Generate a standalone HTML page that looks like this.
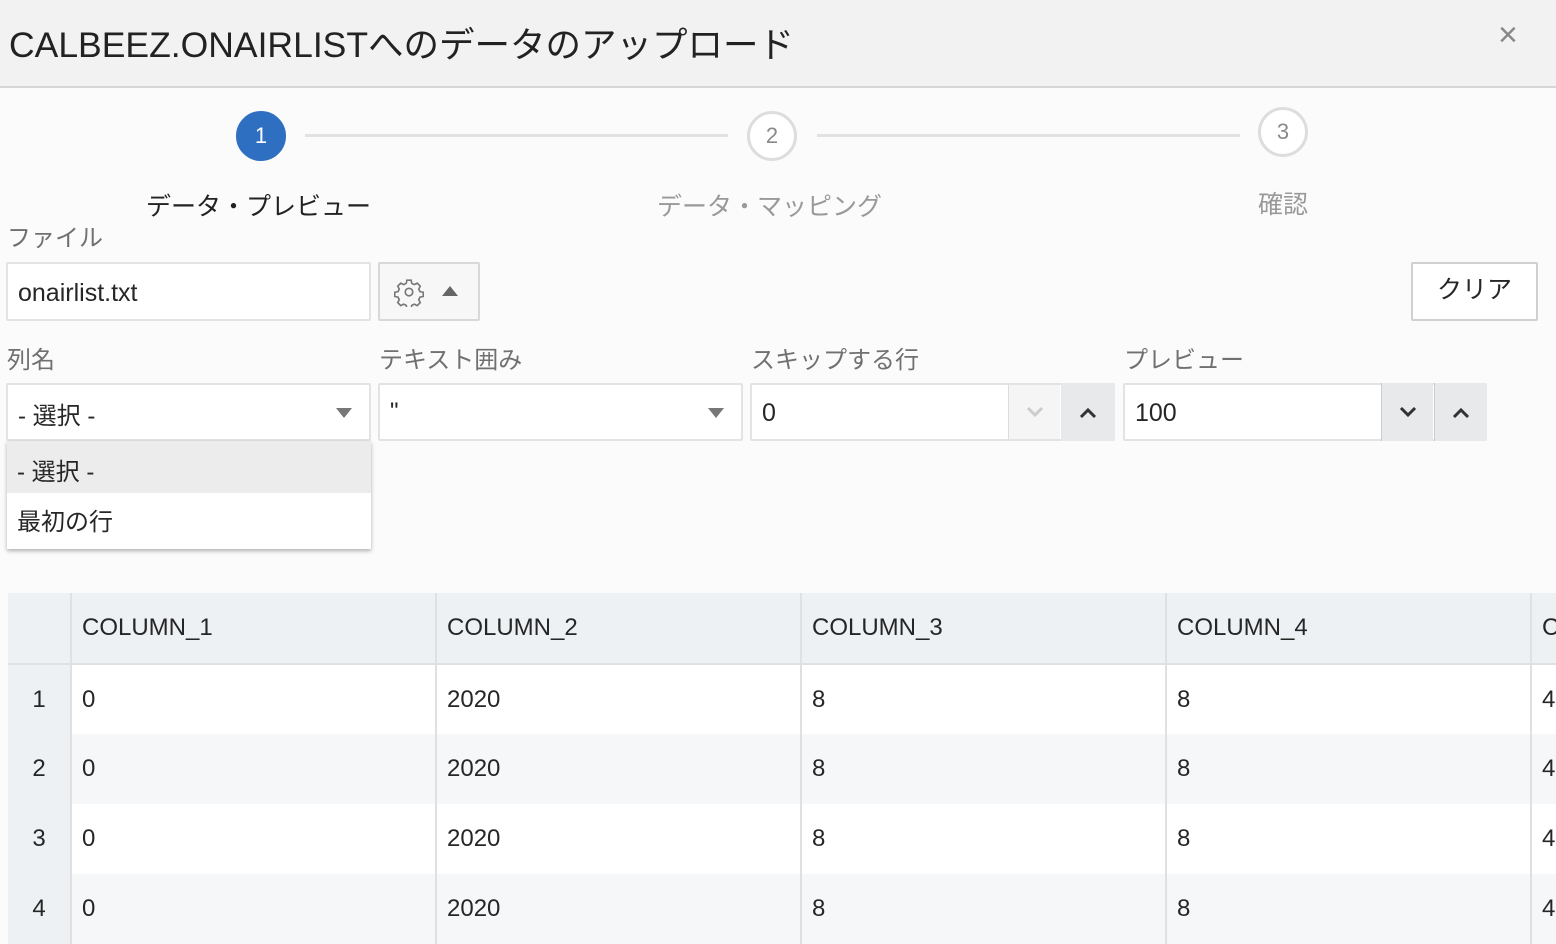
<!DOCTYPE html>
<html><head><meta charset="utf-8"><style>
*{box-sizing:border-box;margin:0;padding:0}
body{width:1556px;height:934px;overflow:hidden;background:#fbfbfb;font-family:"Liberation Sans","Noto Sans CJK JP",sans-serif;color:#262626;position:relative}
.a{position:absolute}
.hdr{left:0;top:0;width:1556px;height:88px;background:#f2f2f2;border-bottom:2px solid #d6d6d6}
.box{background:#fff;border:2px solid #e3e3e3;border-radius:2px}
.lbl{font-size:24px;color:#707070}
.line{height:3px;background:#e2e2e2}
.circ{width:50px;height:50px;border-radius:50%;border:3px solid #ddd;color:#8a8a8a;font-size:22px;text-align:center;line-height:44px;background:#fff}
table{border-collapse:collapse;position:absolute;left:8px;top:593px;font-size:24px;table-layout:fixed;width:1600px}
td{height:70px;border-right:2px solid #e0e0e0;padding-left:10px;background:#fff;overflow:hidden;white-space:nowrap}
tr.h td{background:#eef1f4;height:71px;border-bottom:2px solid #e0e0e0}
tr.g td{background:#f6f7f8}
td.n{background:#eef1f4 !important;text-align:center;padding:0}
</style></head><body>
<div class="a hdr"></div>
<div class="a" style="left:9px;top:17px;font-size:35.5px;color:#222">CALBEEZ.ONAIRLISTへのデータのアップロード</div>
<div class="a" style="left:1498px;top:16px;font-size:34px;color:#888">×</div>

<div class="a line" style="left:305px;top:134px;width:423px"></div>
<div class="a line" style="left:817px;top:134px;width:423px"></div>
<div class="a circ" style="left:236px;top:111px;background:#2f6fc2;border-color:#2f6fc2;color:#fff">1</div>
<div class="a circ" style="left:747px;top:111px">2</div>
<div class="a circ" style="left:1258px;top:107px">3</div>
<div class="a" style="left:146px;top:187px;font-size:25px;color:#222">データ・プレビュー</div>
<div class="a" style="left:657px;top:187px;font-size:25px;color:#999">データ・マッピング</div>
<div class="a" style="left:1258px;top:185px;font-size:25px;color:#999">確認</div>

<div class="a lbl" style="left:7px;top:218px">ファイル</div>
<div class="a box" style="left:6px;top:262px;width:365px;height:59px;font-size:25px;padding:15px 10px">onairlist.txt</div>
<div class="a box" style="left:378px;top:262px;width:102px;height:59px;border-color:#d8d8d8;background:#f7f7f7">
<svg class="a" style="left:14px;top:13px" width="30" height="30" viewBox="0 0 24 24" fill="none" stroke="#777" stroke-width="1.3"><circle cx="12" cy="12" r="3"/><path d="M10.3 2.5h3.4l.5 2.6 2 1 2.4-1.2 2.4 2.4-1.2 2.4 1 2 2.6.5v3.4l-2.6.5-1 2 1.2 2.4-2.4 2.4-2.4-1.2-2 1-.5 2.6h-3.4l-.5-2.6-2-1-2.4 1.2-2.4-2.4 1.2-2.4-1-2-2.6-.5v-3.4l2.6-.5 1-2-1.2-2.4 2.4-2.4 2.4 1.2 2-1z"/></svg>
<div class="a" style="left:62px;top:22px;width:0;height:0;border-left:8px solid transparent;border-right:8px solid transparent;border-bottom:10px solid #666"></div></div>
<div class="a box" style="left:1411px;top:262px;width:127px;height:59px;border-color:#d0d0d0;font-size:25px;text-align:center;line-height:53px">クリア</div>

<div class="a lbl" style="left:7px;top:340px">列名</div>
<div class="a lbl" style="left:379px;top:340px">テキスト囲み</div>
<div class="a lbl" style="left:751px;top:340px">スキップする行</div>
<div class="a lbl" style="left:1124px;top:340px">プレビュー</div>

<div class="a box" style="left:6px;top:383px;width:365px;height:58px;font-size:24px;padding:11px 10px">- 選択 -</div>
<div class="a" style="left:336px;top:408px;border-left:8px solid transparent;border-right:8px solid transparent;border-top:10px solid #777"></div>
<div class="a box" style="left:378px;top:383px;width:365px;height:58px;font-size:24px;padding:13px 10px">"</div>
<div class="a" style="left:708px;top:408px;border-left:8px solid transparent;border-right:8px solid transparent;border-top:10px solid #777"></div>
<div class="a box" style="left:750px;top:383px;width:365px;height:58px;font-size:25px;padding:14px 10px">0</div>
<div class="a" style="left:1008px;top:385px;width:52px;height:54px;background:#f5f5f5;border-left:1px solid #ddd;text-align:center">
<svg width="20" height="54" viewBox="0 0 20 54"><path d="M3 23l7 7 7-7" fill="none" stroke="#ccc" stroke-width="3"/></svg></div>
<div class="a" style="left:1061px;top:383px;width:54px;height:58px;background:#e8e9ea;text-align:center">
<svg width="20" height="58" viewBox="0 0 20 58"><path d="M3 34l7-7 7 7" fill="none" stroke="#333" stroke-width="3"/></svg></div>
<div class="a box" style="left:1123px;top:383px;width:364px;height:58px;font-size:25px;padding:14px 10px">100</div>
<div class="a" style="left:1381px;top:383px;width:52px;height:58px;background:#e8e9ea;border-left:1px solid #ccc;text-align:center">
<svg width="20" height="58" viewBox="0 0 20 58"><path d="M3 25l7 7 7-7" fill="none" stroke="#333" stroke-width="3"/></svg></div>
<div class="a" style="left:1434px;top:383px;width:53px;height:58px;background:#e8e9ea;border-left:1px solid #ccc;text-align:center">
<svg width="20" height="58" viewBox="0 0 20 58"><path d="M3 34l7-7 7 7" fill="none" stroke="#333" stroke-width="3"/></svg></div>

<div class="a" style="left:7px;top:441px;width:364px;height:108px;background:#fff;box-shadow:0 2px 4px rgba(0,0,0,.3);font-size:24px">
<div style="height:52px;background:#ececec;padding:11px 10px">- 選択 -</div>
<div style="padding:9px 10px">最初の行</div></div>

<table>
<colgroup><col style="width:63px"><col style="width:365px"><col style="width:365px"><col style="width:365px"><col style="width:365px"><col style="width:77px"></colgroup>
<tr class="h"><td class="n"></td><td>COLUMN_1</td><td>COLUMN_2</td><td>COLUMN_3</td><td>COLUMN_4</td><td>COLUMN_5</td></tr>
<tr><td class="n">1</td><td>0</td><td>2020</td><td>8</td><td>8</td><td>4</td></tr>
<tr class="g"><td class="n">2</td><td>0</td><td>2020</td><td>8</td><td>8</td><td>4</td></tr>
<tr><td class="n">3</td><td>0</td><td>2020</td><td>8</td><td>8</td><td>4</td></tr>
<tr class="g"><td class="n">4</td><td>0</td><td>2020</td><td>8</td><td>8</td><td>4</td></tr>
</table>
</body></html>
